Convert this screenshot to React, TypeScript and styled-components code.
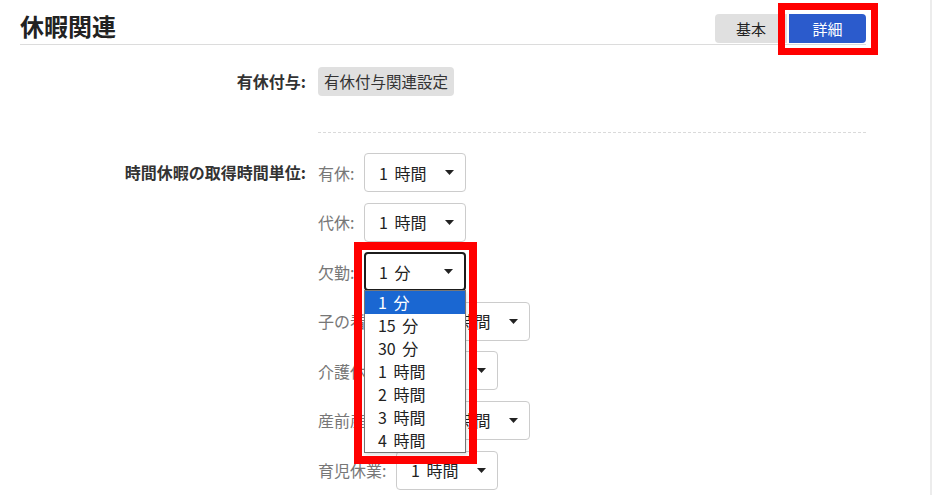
import React from 'react'
import styled, { createGlobalStyle, css } from 'styled-components'

const GlobalStyle = createGlobalStyle`
  html, body {
    margin: 0;
    padding: 0;
    background: #fff;
  }
  body {
    font-family: "Noto Sans CJK JP", "Noto Sans", sans-serif;
    color: #222;
  }
`

const Frame = styled.div`
  width: 930px;
  min-height: 495px;
  border-right: 2px solid #ececec;
  box-sizing: content-box;
`

const Section = styled.section`
  width: 846px;
  padding-left: 20px;
`

const Header = styled.div`
  display: flex;
  justify-content: space-between;
  align-items: flex-end;
  height: 44px;
  border-bottom: 1px solid #dcdcdc;
`

const Title = styled.h2`
  margin: 0 0 6px;
  font-size: 24px;
  line-height: 24px;
  font-weight: 700;
  color: #222;
`

const Toggle = styled.div`
  display: flex;
  gap: 2px;
  margin-bottom: 1px;
`

const ToggleButton = styled.button<{ $active?: boolean; $first?: boolean }>`
  position: relative;
  height: 29px;
  border: none;
  padding: 0;
  font-family: inherit;
  font-size: 15px;
  line-height: 29px;
  width: ${(p) => (p.$first ? '72px' : '77px')};
  border-radius: ${(p) => (p.$first ? '4px 0 0 4px' : '0 4px 4px 0')};
  background: ${(p) => (p.$active ? '#2b5bcc' : '#e0e0e0')};
  color: ${(p) => (p.$active ? '#fff' : '#222')};
`

const Highlight = styled.span<{ $inset: number; $thick: number }>`
  position: absolute;
  box-sizing: border-box;
  pointer-events: none;
  border: ${(p) => p.$thick}px solid #ff0000;
  ${(p) => css`
    top: -${p.$inset}px;
    left: -${p.$inset}px;
    right: -${p.$inset + 1}px;
    bottom: -${p.$inset + 1}px;
  `}
`

const Form = styled.div`
  display: grid;
  grid-template-columns: 286px 548px;
  column-gap: 12px;
  align-items: start;
`

const FieldLabel = styled.div<{ $h: number }>`
  text-align: right;
  font-size: 16px;
  font-weight: 700;
  color: #333;
  height: ${(p) => p.$h}px;
  line-height: ${(p) => p.$h}px;
  white-space: nowrap;
`

const FirstRowLabel = styled(FieldLabel)`
  margin-top: 22px;
`

const FirstRowField = styled.div`
  margin-top: 22px;
`

const GreyButton = styled.button`
  height: 29px;
  padding: 0 6px;
  border: none;
  border-radius: 4px;
  background: #e0e0e0;
  color: #333;
  font-family: inherit;
  font-size: 15.5px;
  line-height: 29px;
`

const Separator = styled.div`
  grid-column: 2;
  margin-top: 36px;
  border-top: 1px dashed #dadada;
`

const UnitLabel = styled(FieldLabel)`
  margin-top: 20px;
`

const UnitList = styled.div`
  margin-top: 20px;
  display: flex;
  flex-direction: column;
  gap: 10.6px;
`

const UnitRow = styled.div`
  display: flex;
  align-items: center;
  gap: 9.5px;
  height: 39px;
`

const UnitName = styled.span`
  font-size: 16px;
  color: #777;
  white-space: nowrap;
`

const SelectWrap = styled.div`
  position: relative;
  width: 102px;
  height: 39px;
`

const SelectBox = styled.div<{ $focused?: boolean }>`
  box-sizing: border-box;
  width: 102px;
  height: 39px;
  display: flex;
  align-items: center;
  justify-content: space-between;
  padding: 0 11px 0 ${(p) => (p.$focused ? '13px' : '14px')};
  border-radius: 4px;
  background: #fff;
  font-size: 16px;
  word-spacing: 3px;
  color: #222;
  border: ${(p) => (p.$focused ? '2px solid #1c1c1c' : '1px solid #cccccc')};
`

const Caret = () => (
  <svg width="9" height="5" viewBox="0 0 9 5">
    <path d="M0 0 H9 L4.5 5 Z" fill="#222" />
  </svg>
)

const Options = styled.ul`
  position: absolute;
  top: 38px;
  left: 0;
  width: 102px;
  box-sizing: border-box;
  margin: 0;
  padding: 0;
  list-style: none;
  background: #fff;
  border: 1px solid #767676;
  box-shadow: 1px 2px 3px rgba(0, 0, 0, 0.12);
  z-index: 2;
`

const Option = styled.li<{ $selected?: boolean }>`
  height: 23px;
  line-height: 23px;
  padding-left: 13px;
  font-size: 16px;
  word-spacing: 3px;
  color: ${(p) => (p.$selected ? '#fff' : '#222')};
  background: ${(p) => (p.$selected ? '#1a67d2' : 'transparent')};
`

const SelectFrame = styled.span`
  position: absolute;
  top: -10px;
  left: -10px;
  width: 123px;
  height: 222px;
  box-sizing: border-box;
  border: 8px solid #ff0000;
  z-index: 3;
  pointer-events: none;
`

const units = [
  { name: '有休:', value: '1 時間' },
  { name: '代休:', value: '1 時間' },
  { name: '欠勤:', value: '1 分', open: true },
  { name: '子の看護休暇:', value: '1 時間' },
  { name: '介護休暇:', value: '1 時間' },
  { name: '産前産後休暇:', value: '1 時間' },
  { name: '育児休業:', value: '1 時間' },
]

const choices = ['1 分', '15 分', '30 分', '1 時間', '2 時間', '3 時間', '4 時間']

export default function App() {
  return (
    <>
      <GlobalStyle />
      <Frame>
        <Section>
          <Header>
            <Title>休暇関連</Title>
            <Toggle>
              <ToggleButton $first>基本</ToggleButton>
              <ToggleButton $active>
                詳細
                <Highlight $inset={11} $thick={7} />
              </ToggleButton>
            </Toggle>
          </Header>

          <Form>
            <FirstRowLabel $h={29}>有休付与:</FirstRowLabel>
            <FirstRowField>
              <GreyButton>有休付与関連設定</GreyButton>
            </FirstRowField>

            <Separator />

            <UnitLabel $h={39}>時間休暇の取得時間単位:</UnitLabel>
            <UnitList>
              {units.map((u) => (
                <UnitRow key={u.name}>
                  <UnitName>{u.name}</UnitName>
                  <SelectWrap>
                    <SelectBox $focused={u.open}>
                      <span>{u.value}</span>
                      <Caret />
                    </SelectBox>
                    {u.open && (
                      <>
                        <Options>
                          {choices.map((c) => (
                            <Option key={c} $selected={c === u.value}>
                              {c}
                            </Option>
                          ))}
                        </Options>
                        <SelectFrame />
                      </>
                    )}
                  </SelectWrap>
                </UnitRow>
              ))}
            </UnitList>
          </Form>
        </Section>
      </Frame>
    </>
  )
}
